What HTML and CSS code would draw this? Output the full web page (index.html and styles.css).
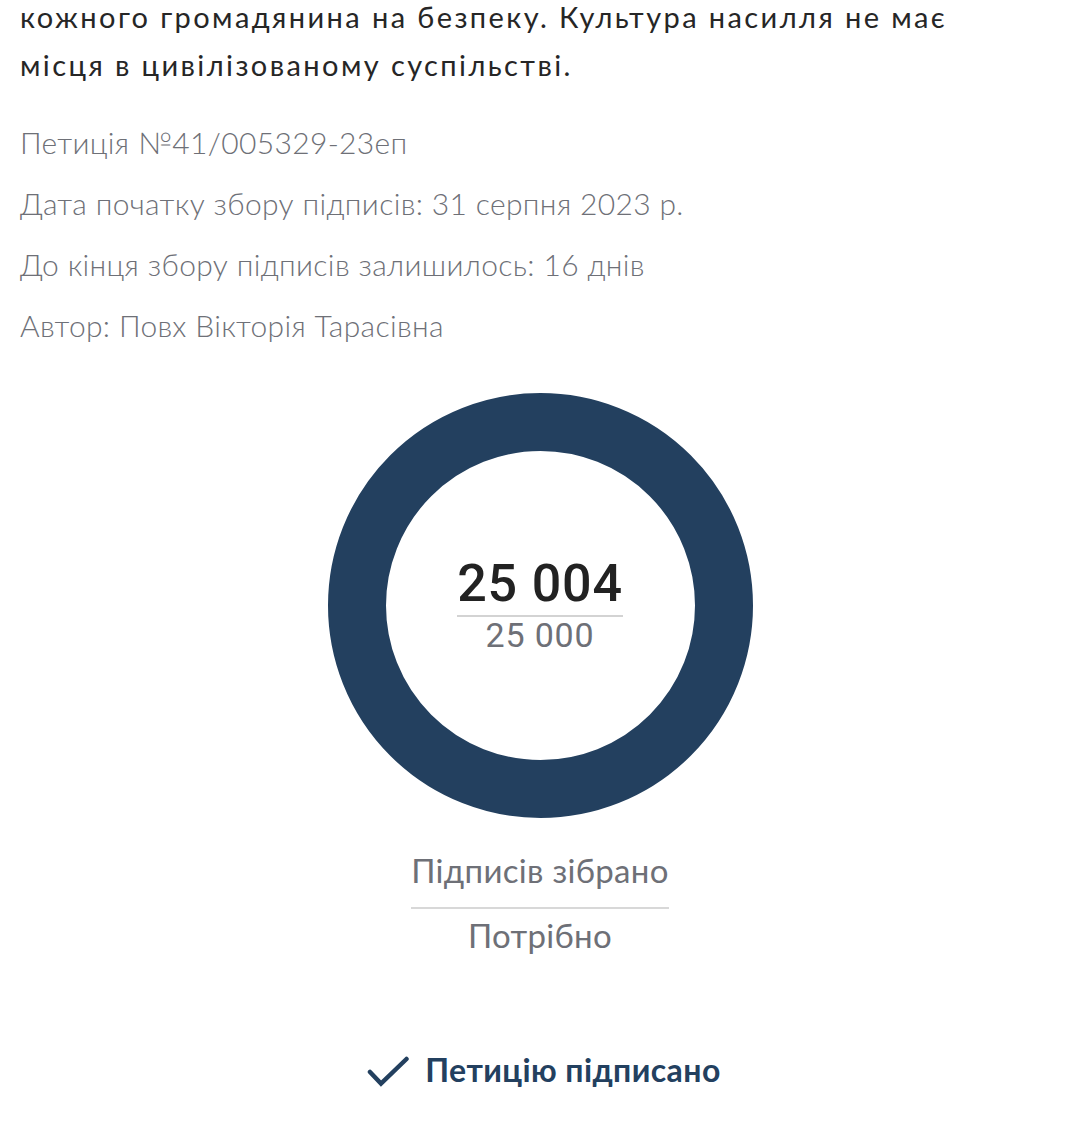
FILE: index.html
```html
<!DOCTYPE html>
<html lang="uk">
<head>
<meta charset="utf-8">
<link rel="stylesheet" href="styles.css">
</head>
<body>
<main class="page">
  <p class="lead">кожного громадянина на безпеку. Культура насилля не має місця в цивілізованому суспільстві.</p>
  <ul class="meta">
    <li>Петиція №41/005329-23еп</li>
    <li>Дата початку збору підписів: 31 серпня 2023 р.</li>
    <li>До кінця збору підписів залишилось: 16 днів</li>
    <li>Автор: Повх Вікторія Тарасівна</li>
  </ul>
  <section class="progress">
    <div class="ring">
      <div class="counts">
        <div class="collected">25 004</div>
        <div class="needed">25 000</div>
      </div>
    </div>
    <div class="legend">
      <div class="legend-top">Підписів зібрано</div>
      <div class="legend-bottom">Потрібно</div>
    </div>
  </section>
  <div class="signed">
    <svg class="check" width="42" height="34" viewBox="0 0 42 34" aria-hidden="true">
      <path d="M3 17 L14 28.5 L39.5 4" fill="none" stroke="#23405f" stroke-width="4.5" stroke-linecap="round" stroke-linejoin="miter"/>
    </svg>
    <span>Петицію підписано</span>
  </div>
</main>
</body>
</html>
```

FILE: styles.css
```css
html, body {
  margin: 0;
  padding: 0;
  background: #ffffff;
}

.page {
  width: 1080px;
  padding: 0 20px;
  box-sizing: border-box;
  font-family: "Lato", "Open Sans", sans-serif;
}

.lead {
  margin: -7px 0 0 0;
  font-size: 29px;
  line-height: 48px;
  color: #262626;
  letter-spacing: 2.4px;
  max-width: 990px;
}

.meta {
  list-style: none;
  margin: 23px 0 0 0;
  padding: 0;
  color: #6e7077;
  font-size: 30px;
  font-weight: 300;
  letter-spacing: 0.35px;
}

.meta li {
  height: 61px;
  line-height: 61px;
}

.progress {
  display: flex;
  flex-direction: column;
  align-items: center;
  margin-top: 37px;
}

.ring {
  width: 425px;
  height: 425px;
  box-sizing: border-box;
  border: 58px solid #23405f;
  border-radius: 50%;
  display: flex;
  align-items: center;
  justify-content: center;
}

.counts {
  display: flex;
  flex-direction: column;
  align-items: center;
  font-family: "Roboto", sans-serif;
}

.collected {
  font-size: 52px;
  font-weight: 500;
  color: #222222;
  line-height: 54px;
  letter-spacing: 0.8px;
  padding: 0 0 4px;
  border-bottom: 2px solid #d3d3d3;
}

.needed {
  font-size: 34px;
  color: #6e7077;
  line-height: 37px;
  letter-spacing: 0.8px;
}

.legend {
  margin-top: 30px;
  display: flex;
  flex-direction: column;
  align-items: center;
  color: #6e7077;
  font-size: 33px;
  letter-spacing: 0.3px;
}

.legend-top {
  line-height: 44px;
  padding-bottom: 15px;
  border-bottom: 2px solid #d8d8d8;
}

.legend-bottom {
  line-height: 52px;
}

.signed {
  margin-top: 88px;
  padding-left: 8px;
  display: flex;
  align-items: center;
  justify-content: center;
  gap: 16px;
  color: #23405f;
  font-size: 32px;
  font-weight: 700;
  letter-spacing: 0.4px;
}

.check {
  display: block;
  margin-top: 6px;
}
```
